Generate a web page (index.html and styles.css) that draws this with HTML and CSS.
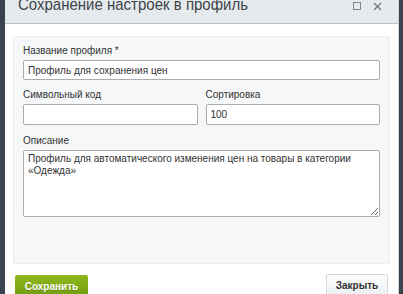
FILE: index.html
```html
<!DOCTYPE html>
<html lang="ru">
<head>
    <meta charset="UTF-8">
    <meta name="viewport" content="width=device-width, initial-scale=1.0">
    <link rel="stylesheet" href="styles.css">
    <title>Сохранение настроек в профиль</title>
</head>
<body>
    <div class="dialog">
        <div class="head">
            <h1 class="title">Сохранение настроек в профиль</h1>
            <div class="head-icons">
                <svg class="ico" width="8" height="8" viewBox="0 0 8 8">
                    <rect x="0.5" y="0.5" width="7" height="7" fill="none" stroke="#7d8790" stroke-width="1"/>
                </svg>
                <svg class="ico" width="9" height="9" viewBox="0 0 9 9">
                    <path d="M1 1 L8 8 M8 1 L1 8" stroke="#6d7780" stroke-width="1.4"/>
                </svg>
            </div>
        </div>

        <div class="content">
            <div class="panel">
                <div class="field">
                    <label>Название профиля *</label>
                    <input type="text" value="Профиль для сохранения цен">
                </div>
                <div class="row">
                    <div class="field">
                        <label>Символьный код</label>
                        <input type="text" class="tall" value="">
                    </div>
                    <div class="field">
                        <label>Сортировка</label>
                        <input type="text" class="tall" value="100">
                    </div>
                </div>
                <div class="field">
                    <label>Описание</label>
                    <textarea>Профиль для автоматического изменения цен на товары в категории «Одежда»</textarea>
                </div>
            </div>

            <div class="buttons">
                <button class="btn-save">Сохранить</button>
                <button class="btn-close">Закрыть</button>
            </div>
        </div>
    </div>
</body>
</html>
```

FILE: styles.css
```css
body {
    margin: 0;
    background-color: #39444e;
    font-family: 'Liberation Sans', Arial, sans-serif;
    overflow: hidden;
    height: 294px;
}

.dialog {
    margin: -10px 4px 0 5px;
    background-color: #fff;
    border-right: 1px solid #cfd4d8;
    height: 330px;
}

/* ____________________________________________________ */
.head {
    height: 34px;
    box-sizing: border-box;
    border-bottom: 1px solid #bcc3c8;
    background-color: #e5eaed;
    display: flex;
    align-items: center;
    padding: 0 16px 0 13px;
}

.title {
    flex: 1;
    margin: -6px 0 0 0;
    font-weight: normal;
    font-size: 15px;
    color: #3f4449;
    transform: scaleY(1.12);
}

.head-icons {
    display: flex;
    align-items: center;
    gap: 12px;
    margin-top: -1px;
}

.ico {
    display: block;
}

/* ____________________________________________________ */
.content {
    padding: 12px 8px 0 8px;
}

.panel {
    background-color: #f5f7f8;
    border: 1px solid #eceff1;
    padding: 8px 9px 46px 9px;
}

.field {
    display: flex;
    flex-direction: column;
}

.field label {
    font-size: 10px;
    color: #333;
    line-height: 12px;
    margin-bottom: 3px;
}

.row {
    display: flex;
    gap: 8px;
    margin-top: 9px;
}

.row .field {
    flex: 1;
}

.row + .field {
    margin-top: 10px;
}

input, textarea {
    font-family: 'Liberation Sans', Arial, sans-serif;
    font-size: 10px;
    color: #333;
    border: 1px solid #a9adb1;
    border-radius: 2px;
    background-color: #fff;
    box-sizing: border-box;
    outline: none;
    margin: 0;
}

input {
    height: 20px;
    padding: 0 4px;
}

input.tall {
    height: 21px;
}

textarea {
    height: 67px;
    padding: 2px 4px;
    line-height: 12px;
    resize: vertical;
}

/* ____________________________________________________ */
.buttons {
    display: flex;
    justify-content: space-between;
    padding: 11px 2px 0 2px;
}

.btn-save {
    width: 73px;
    height: 24px;
    border: none;
    border-radius: 2px;
    background: linear-gradient(#8fb81e, #6f9a0c);
    color: #fff;
    font-family: 'Liberation Sans', Arial, sans-serif;
    font-weight: bold;
    font-size: 10px;
    padding-bottom: 2px;
    text-shadow: 0 1px 0 rgba(0, 0, 0, 0.2);
}

.btn-close {
    width: 62px;
    height: 24px;
    margin-top: -1px;
    border: 1px solid #d5d9dc;
    border-radius: 2px;
    background: linear-gradient(#fff, #e9edef);
    color: #333;
    font-family: 'Liberation Sans', Arial, sans-serif;
    font-size: 10px;
    font-weight: bold;
    padding-bottom: 2px;
}
```
